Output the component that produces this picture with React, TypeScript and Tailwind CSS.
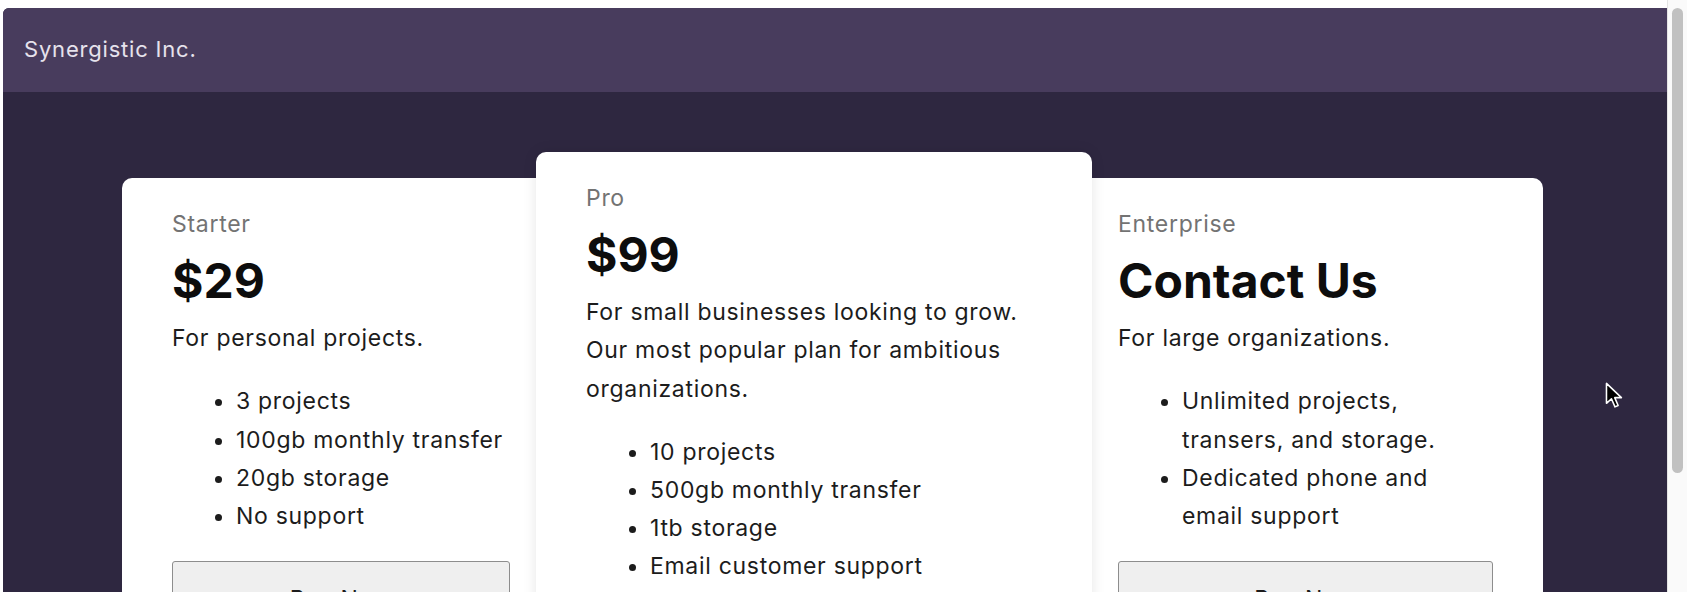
import React from "react";

type Plan = {
  name: string;
  price: string;
  desc: string;
  features: string[];
  width: string;
  featured?: boolean;
};

const plans: Plan[] = [
  {
    name: "Starter",
    price: "$29",
    desc: "For personal projects.",
    features: ["3 projects", "100gb monthly transfer", "20gb storage", "No support"],
    width: "w-[438px]",
  },
  {
    name: "Pro",
    price: "$99",
    desc: "For small businesses looking to grow. Our most popular plan for ambitious organizations.",
    features: ["10 projects", "500gb monthly transfer", "1tb storage", "Email customer support"],
    width: "w-[556px]",
    featured: true,
  },
  {
    name: "Enterprise",
    price: "Contact Us",
    desc: "For large organizations.",
    features: ["Unlimited projects, transers, and storage.", "Dedicated phone and email support"],
    width: "w-[475px]",
  },
];

function Card({ plan }: { plan: Plan }) {
  const base =
    "shrink-0 rounded-[10px] bg-white px-[50px] pt-[27px] pb-[40px] text-[#1c1c1c] text-[23px] leading-[38.2px] tracking-[0.7px]";
  const cls = plan.featured
    ? `${base} ${plan.width} relative z-10 -mx-[24px] shadow-[0_0_14px_rgba(0,0,0,0.10)]`
    : `${base} ${plan.width} mt-[26px]`;
  return (
    <div className={cls}>
      <div className="mb-[8px] text-[#737373]">{plan.name}</div>
      <div className="mb-[8px] text-[48px] font-bold leading-[60px] tracking-[0px] text-[#0d0d0d]">
        {plan.price}
      </div>
      <p className="mb-[25px]">{plan.desc}</p>
      <ul className="mb-[26px] list-disc pl-[64px]">
        {plan.features.map((f) => (
          <li key={f}>{f}</li>
        ))}
      </ul>
      <button className="w-full rounded-[3px] border border-[#8d8d8d] bg-[#efefef] py-[18px] text-center text-[23px] leading-[38px] tracking-[0.7px] text-[#1c1c1c]">
        Buy Now
      </button>
    </div>
  );
}

export default function App() {
  return (
    <div
      className="relative flex h-[592px] w-full overflow-hidden bg-white"
      style={{ fontFamily: "Inter, 'Open Sans', sans-serif" }}
    >
      <div className="flex min-w-0 flex-1 flex-col pl-[3px] pt-[8px]">
        <div className="flex min-h-0 flex-1 flex-col overflow-hidden rounded-tl-[6px] bg-[#2e2740]">
          <header className="flex h-[84px] shrink-0 items-center bg-[#483c5d] px-[21px] pb-[2px]">
            <span className="text-[22px] tracking-[0.8px] text-[#e6e2ec]">Synergistic Inc.</span>
          </header>
          <main className="flex items-start pl-[119px] pt-[60px]">
            {plans.map((p) => (
              <Card key={p.name} plan={p} />
            ))}
          </main>
        </div>
      </div>
      <div className="flex w-[20px] shrink-0 justify-center border-l border-[#e4e4e4] bg-[#fafafa] pt-[8px]">
        <div className="h-[465px] w-[11px] rounded-full bg-[#c1c1c1]" />
      </div>
      <svg
        className="absolute left-[1605px] top-[382px]"
        width="20"
        height="27"
        viewBox="0 0 14 19"
      >
        <path
          d="M1 1 L1 15 L4.5 11.8 L7 17.5 L9.2 16.5 L6.8 11 L11.5 11 Z"
          fill="#000"
          stroke="#fff"
          strokeWidth="1.1"
          strokeLinejoin="round"
        />
      </svg>
    </div>
  );
}
